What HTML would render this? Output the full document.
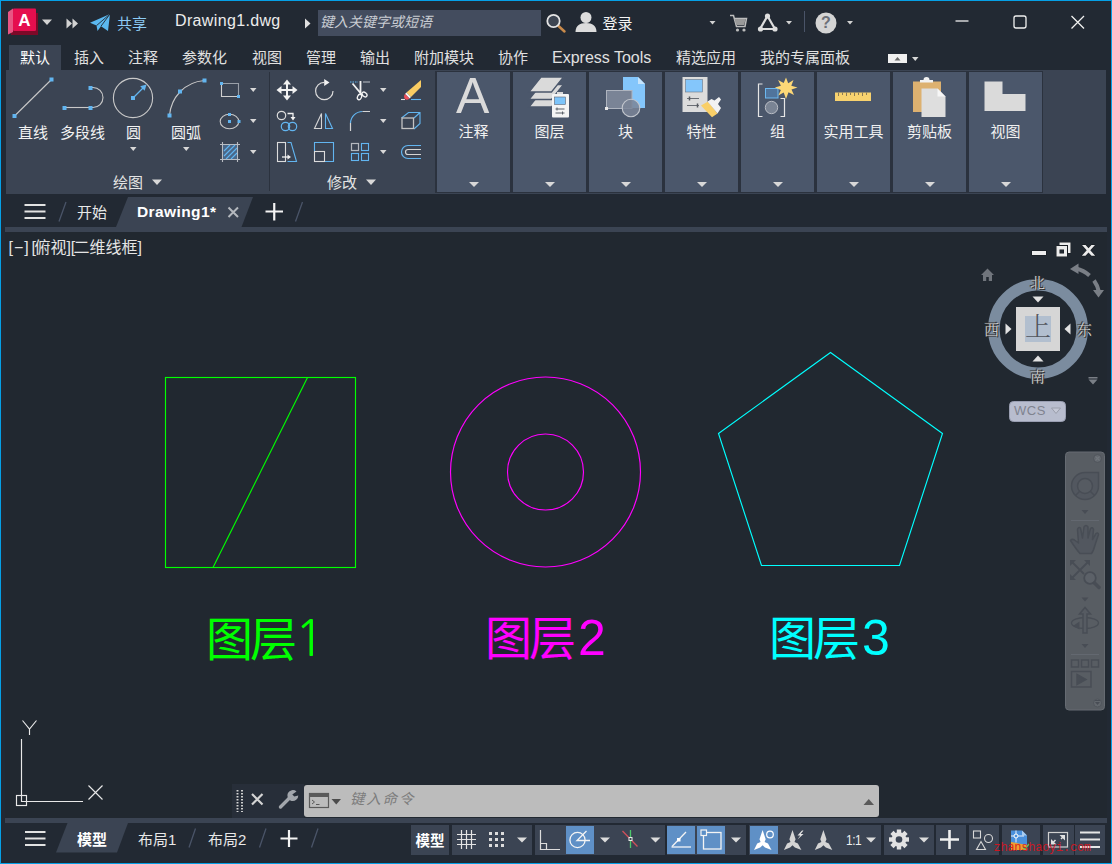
<!DOCTYPE html>
<html lang="zh-CN">
<head>
<meta charset="utf-8">
<title>Drawing1.dwg</title>
<style>
*{box-sizing:border-box;margin:0;padding:0}
html,body{width:1112px;height:864px;overflow:hidden;background:#222933}
body{font-family:"Liberation Sans","Noto Sans CJK SC",sans-serif;color:#e6e6e6;font-size:15px;position:relative}
#win{position:absolute;left:0;top:0;width:1112px;height:864px;border:1px solid #05a0e6;background:#222933;overflow:hidden}
.abs{position:absolute}
.t{position:absolute;white-space:nowrap;line-height:1}
svg{position:absolute;overflow:visible}
/* title bar */
#search{position:absolute;left:317px;top:9px;width:223px;height:26px;background:#434c5e}
#search span{position:absolute;left:2px;top:5px;font-style:italic;font-size:14px;color:#c9cdd3;line-height:1}
/* ribbon */
#tabs .t{top:49px;font-size:15px;color:#e0e0e0}
#tab-active{position:absolute;left:8px;top:44px;width:52px;height:26px;background:#3b4453}
#ribbon{position:absolute;left:5px;top:69px;width:1100px;height:124px;background:#3b4453}
.panel{position:absolute;top:71px;width:73px;height:120px;background:#4b576b}
.panel .lbl{position:absolute;left:0;width:73px;top:52px;text-align:center;font-size:15px;line-height:1;color:#f0f0f0}
.dd{position:absolute;width:0;height:0;border-left:5px solid transparent;border-right:5px solid transparent;border-top:5px solid #d8d8d8}
.dds{position:absolute;width:0;height:0;border-left:4px solid transparent;border-right:4px solid transparent;border-top:4px solid #d8d8d8}
.dg{font-size:50px;margin-left:5px}
.vcl{font-size:15px;color:#cfcfcf;text-shadow:0 0 1px #333,1px 1px 0 #333,-1px -1px 0 #333;font-family:"Liberation Serif","Noto Serif CJK SC",serif}
.rl{font-size:15px;color:#f2f2f2}
.bk{letter-spacing:-1.500px}
/* file tabs */
#ftbar{position:absolute;left:4px;top:226px;width:1102px;height:5px;background:#3b4453}
/* drawing */
#cmd-left{position:absolute;left:231px;top:783px;width:72px;height:34px;background:#272e39}
#cmd{position:absolute;left:303px;top:784px;width:575px;height:32px;background:#bcbcbc;border-radius:3px}
#sbbar{position:absolute;left:4px;top:817px;width:1102px;height:5px;background:#3b4453}
.sb{position:absolute;top:824px;height:30px;background:#3b4453}
.sbon{position:absolute;top:825px;height:28px;background:#5f90c6}
</style>
</head>
<body>
<div id="win">

<!-- TITLE BAR -->
<div id="titlebar">
  <div id="search"><span>键入关键字或短语</span></div>
  <svg width="1110" height="44" style="left:0;top:0">
    <!-- logo -->
    <path d="M10 31l2-1h23v-18h2v22h-27z" fill="#7d0928"/>
    <path d="M7 11l5-3.500v23.500l-5 2.500z" fill="#e85583"/>
    <rect x="12" y="7.500" width="23" height="22.500" rx="1" fill="#e50e4e"/>
    <!-- qat arrows -->
    <path d="M41 18.500h10l-5 5.500z" fill="#d2d2d2"/>
    <path d="M65.500 17.500v10l5.500-5z M71.500 17.500v10l5.500-5z" fill="#d2d2d2"/>
    <!-- share plane -->
    <path d="M89 21.800L109 13L107 30L100 25.200L96.500 30L95.500 24.600Z" fill="#5bb8f0"/>
    <path d="M109 13L95.500 24.600M109 13L100 25.200" stroke="#222933" stroke-width=".9" fill="none"/>
    <path d="M304 17.500v10l5.500-5z" fill="#e0e0e0"/>
    <!-- magnifier -->
    <path d="M557.500 25l6 5.500" stroke="#c98a4a" stroke-width="2.500" stroke-linecap="round"/>
    <circle cx="552.500" cy="20" r="6.200" fill="#3d4552" stroke="#e4e4e4" stroke-width="1.800"/>
    <!-- user -->
    <circle cx="585" cy="16.500" r="5.500" fill="#dcdcdc"/>
    <path d="M574.500 31c0-6 4-9 10.500-9s10.500 3 10.500 9z" fill="#dcdcdc"/>
    <path d="M708.500 20h6l-3 3.500z" fill="#d2d2d2"/>
    <!-- cart -->
    <g fill="none" stroke="#bdbdbd" stroke-width="1.500">
      <path d="M729 14.500h3.500l3 11h8.500l1.500-8h-12"/>
    </g>
    <path d="M733.500 18h11l-1.200 6h-8z" fill="#9a9a9a"/>
    <circle cx="736.500" cy="29" r="1.600" fill="#bdbdbd"/><circle cx="743" cy="29" r="1.600" fill="#bdbdbd"/>
    <!-- autodesk app -->
    <path d="M766.500 15l-7.500 13h15z" fill="none" stroke="#dedede" stroke-width="2.200" stroke-linejoin="round"/>
    <circle cx="766.500" cy="15" r="2.600" fill="#dedede"/><circle cx="759.500" cy="28" r="2.600" fill="#dedede"/><circle cx="774" cy="28" r="2.600" fill="#dedede"/>
    <path d="M785 20h6l-3 3.500z" fill="#d2d2d2"/>
    <path d="M803.500 10v21" stroke="#4a5468" stroke-width="1"/>
    <!-- help -->
    <circle cx="825" cy="22" r="10.500" fill="#d4d4d4"/>
    <path d="M846 20h6l-3 3.500z" fill="#d2d2d2"/>
    <!-- window controls -->
    <g fill="none" stroke="#f0f0f0" stroke-width="1.300">
      <path d="M954.500 20h13"/>
      <rect x="1013" y="15" width="12" height="12" rx="2"/>
      <path d="M1070.500 15l12.500 12.500M1083 15l-12.500 12.500"/>
    </g>
  </svg>
  <div class="t" style="left:17.300px;top:11px;font-size:17px;font-weight:bold;color:#fff">A</div>
  <div class="t" style="left:820px;top:14px;font-size:16px;font-weight:bold;color:#6c7078">?</div>
  <div class="t" style="left:174px;top:12px;font-size:16px;color:#ececec;letter-spacing:.35px">Drawing1.dwg</div>
  <div class="t" style="left:116px;top:15px;font-size:15px;color:#8ccbf5">共享</div>
  <div class="t" style="left:601.500px;top:15px;font-size:15px;color:#f4f4f4">登录</div>
</div>

<!-- RIBBON TABS -->
<div id="tabs">
  <div id="tab-active"></div>
  <div class="t" style="left:19px;color:#fff">默认</div>
  <div class="t" style="left:73px">插入</div>
  <div class="t" style="left:127px">注释</div>
  <div class="t" style="left:181px">参数化</div>
  <div class="t" style="left:251px">视图</div>
  <div class="t" style="left:305px">管理</div>
  <div class="t" style="left:359px">输出</div>
  <div class="t" style="left:413px">附加模块</div>
  <div class="t" style="left:497px">协作</div>
  <div class="t" style="left:551px;top:49px;font-size:16px">Express Tools</div>
  <div class="t" style="left:675px">精选应用</div>
  <div class="t" style="left:759px">我的专属面板</div>
</div>

<!-- RIBBON -->
<div id="ribbon"></div>
<div class="abs" style="left:434px;top:70px;width:608px;height:122px;background:#2b323e"></div>
<div id="panels">
  <div class="panel" style="left:436px"><div class="lbl">注释</div><div class="dd" style="left:32px;top:110px"></div></div>
  <div class="panel" style="left:512px"><div class="lbl">图层</div><div class="dd" style="left:32px;top:110px"></div></div>
  <div class="panel" style="left:588px"><div class="lbl">块</div><div class="dd" style="left:32px;top:110px"></div></div>
  <div class="panel" style="left:664px"><div class="lbl">特性</div><div class="dd" style="left:32px;top:110px"></div></div>
  <div class="panel" style="left:740px"><div class="lbl">组</div><div class="dd" style="left:32px;top:110px"></div></div>
  <div class="panel" style="left:816px"><div class="lbl">实用工具</div><div class="dd" style="left:32px;top:110px"></div></div>
  <div class="panel" style="left:892px"><div class="lbl">剪贴板</div><div class="dd" style="left:32px;top:110px"></div></div>
  <div class="panel" style="left:968px"><div class="lbl">视图</div><div class="dd" style="left:32px;top:110px"></div></div>
</div>


<!-- RIBBON ICONS (page coords) -->
<svg width="1112" height="200" style="left:-1px;top:-1px" fill="none">
  <!-- collapse button in tab row -->
  <rect x="888" y="54" width="19" height="9" fill="#f0f0f0"/>
  <path d="M894.500 60.500h6l-3-3.500z" fill="#6a6a6a"/>
  <path d="M912 57h6.500l-3.250 4z" fill="#d8d8d8"/>
  <!-- separators -->
  <path d="M269.500 72v119" stroke="#2b323e" stroke-width="1"/>
  <!-- DRAW: line -->
  <g stroke="#c9c9c9" stroke-width="1.100">
    <path d="M14.500 116l37-36.500"/>
    <path d="M65 107.500h25.500"/>
    <path d="M90.500 87.500h2.500a10 10 0 0 1 0 20h-2.500"/>
    <circle cx="133" cy="98" r="19.600"/>
    <path d="M169.500 115.500C171 98 184 82 204.500 80.500"/>
  </g>
  <path d="M133 98l11-11" stroke="#62b5f0" stroke-width="1.200"/>
  <path d="M146.500 84.500l-1.800 6.300-4.500-4.500z" fill="#62b5f0"/>
  <g fill="#62b5f0">
    <rect x="12.500" y="114" width="4" height="4"/><rect x="49.500" y="77.500" width="4" height="4"/>
    <rect x="62.500" y="106" width="4" height="4"/><rect x="88.500" y="106" width="4" height="4"/><rect x="88.500" y="86" width="4" height="4"/>
    <rect x="131" y="96" width="4" height="4"/>
    <rect x="167.500" y="113.500" width="4" height="4"/><rect x="178" y="89.500" width="4" height="4"/><rect x="202.500" y="78.500" width="4" height="4"/>
  </g>
  <!-- rectangle -->
  <path d="M221.500 83.500h17v13" stroke="#9aa0a8" stroke-width="1.100"/>
  <path d="M221.500 83.500v13h17" stroke="#d0d0d0" stroke-width="1.100"/>
  <rect x="220" y="82" width="3" height="3" fill="#62b5f0"/><rect x="237" y="95" width="3" height="3" fill="#62b5f0"/>
  <!-- ellipse -->
  <ellipse cx="229.500" cy="121.500" rx="9.300" ry="7.300" stroke="#c9c9c9" stroke-width="1.100"/>
  <rect x="228" y="113" width="3" height="3" fill="#62b5f0"/><rect x="228" y="120" width="3" height="3" fill="#62b5f0"/><rect x="237.500" y="120" width="3" height="3" fill="#62b5f0"/>
  <!-- hatch -->
  <path d="M220 144.500h20M220 159.500h20M222.500 142v20M237.500 142v20" stroke="#b8bcc2" stroke-width="1.100"/>
  <rect x="223" y="145" width="14" height="14" fill="#4a6788"/>
  <path d="M224 151l6-6M224 156l11-11M226 159l11-11M231 159l6-6" stroke="#62b5f0" stroke-width="1.100"/>
  <!-- small dropdown arrows -->
  <g fill="#d8d8d8">
    <path d="M130 147h6.500l-3.250 4z"/><path d="M183 147h6.500l-3.250 4z"/>
    <path d="M250 88h6.500l-3.250 4z"/><path d="M250 119h6.500l-3.250 4z"/><path d="M250 150h6.500l-3.250 4z"/>
    <path d="M380 88h6.500l-3.250 4z"/><path d="M380 119h6.500l-3.250 4z"/><path d="M380 150h6.500l-3.250 4z"/>
    <path d="M152 179.500h10l-5 5.500z"/><path d="M366 179.500h10l-5 5.500z"/>
  </g>
  <!-- MODIFY: move -->
  <g fill="#f2f2f2">
    <path d="M286 84h2v12h-2z M281 89h12v2h-12z"/>
    <path d="M287 79.500l4 5h-8z M287 100.500l4-5h-8z M276.500 90l5-4v8z M297.500 90l-5-4v8z"/>
  </g>
  <!-- rotate -->
  <path d="M333 91A8.700 8.700 0 1 1 324.300 82.300" stroke="#dcdcdc" stroke-width="1.200"/>
  <path d="M324.200 79l5.300 3.500-5.300 3.500z" fill="#f2f2f2"/>
  <!-- trim -->
  <path d="M350 82h8" stroke="#62b5f0" stroke-width="1.200" stroke-dasharray="1.500 1"/>
  <path d="M363 82h7" stroke="#a8adb5" stroke-width="1.200"/>
  <path d="M352.500 83.500l10 12M360.500 81v14" stroke="#f2f2f2" stroke-width="1.800"/>
  <ellipse cx="359.500" cy="97" rx="2" ry="2.800" stroke="#f2f2f2" stroke-width="1.300" transform="rotate(25 359.500 97)"/>
  <ellipse cx="364.500" cy="94.500" rx="2" ry="2.800" stroke="#f2f2f2" stroke-width="1.300" transform="rotate(-50 364.500 94.500)"/>
  <!-- erase -->
  <path d="M421 80v7l-10 10-4.500-4.500z" fill="#f9cc62"/>
  <path d="M406.500 92.500l4.500 4.500-1.500 1.500-4.500-4.500z" fill="#f4f4f4"/>
  <path d="M405 94l4.500 4.500c-1.500 1.500-3.500 1.500-4.500.5s-1.500-3.500 0-5z" fill="#f0505a"/>
  <path d="M401 99.500h4" stroke="#e0e0e0" stroke-width="1.100"/><path d="M411 99.500h10" stroke="#62b5f0" stroke-width="1.100"/>
  <!-- copy -->
  <circle cx="281.500" cy="115.500" r="4.200" stroke="#dcdcdc" stroke-width="1.200"/>
  <path d="M287.500 113.500h5.500v4" stroke="#f2f2f2" stroke-width="1.300"/><path d="M290.500 117h5l-2.500 3.500z" fill="#f2f2f2"/>
  <circle cx="285.500" cy="126.500" r="4.200" stroke="#62b5f0" stroke-width="1.200"/><circle cx="292.500" cy="126.500" r="4.200" stroke="#62b5f0" stroke-width="1.200"/>
  <!-- mirror -->
  <path d="M321.500 113.500v15h-7z" stroke="#d4d4d4" stroke-width="1.100"/>
  <path d="M325.500 113.500v15h7z" stroke="#62b5f0" stroke-width="1.100"/>
  <!-- fillet -->
  <path d="M350.500 123a12 12 0 0 1 12-11.500" stroke="#62b5f0" stroke-width="1.200"/>
  <path d="M362.500 111.500h7.500M350.500 123v8" stroke="#d4d4d4" stroke-width="1.200"/>
  <!-- box/explode -->
  <path d="M401.500 118l7-5.500h11.500v11l-6 5.500M420 112.500l-6 5.500" stroke="#62b5f0" stroke-width="1.100"/>
  <rect x="402" y="118" width="11.500" height="10.500" stroke="#c4c4c4" stroke-width="1.300"/>
  <!-- stretch -->
  <rect x="277.500" y="142.500" width="8" height="19" stroke="#dcdcdc" stroke-width="1.100"/>
  <path d="M287.500 142.500h3.500l5.500 19h-9" stroke="#62b5f0" stroke-width="1.100"/>
  <path d="M282 157h6" stroke="#f2f2f2" stroke-width="1.300"/><path d="M287.500 154.500l3.500 2.500-3.500 2.500z" fill="#f2f2f2"/>
  <!-- scale -->
  <path d="M314.500 151v-8.500h19v19h-8.500" stroke="#62b5f0" stroke-width="1.100"/>
  <rect x="314.500" y="151.500" width="10" height="10" stroke="#dcdcdc" stroke-width="1.100"/>
  <!-- array -->
  <rect x="351.500" y="143.500" width="7" height="7" stroke="#b4b8be" stroke-width="1.200"/>
  <g stroke="#62b5f0" stroke-width="1.100"><rect x="361.500" y="143.500" width="7" height="7"/><rect x="351.500" y="153.500" width="7" height="7"/><rect x="361.500" y="153.500" width="7" height="7"/></g>
  <!-- offset -->
  <path d="M421 145.500h-13a6.500 6.500 0 0 0 0 13h13" stroke="#62b5f0" stroke-width="1.200"/>
  <path d="M421 149.500h-13a2.500 2.500 0 0 0 0 5h13" stroke="#d4d4d4" stroke-width="1.200"/>

  <!-- PANEL: layers -->
  <g fill="#dadada" stroke="#4b576b" stroke-width="1.300">
    <path d="M541 92h22.500l-12 15h-22.500z"/>
    <path d="M541 84.500h22.500l-12 15h-22.500z"/>
    <path d="M541 77h22.500l-12 15h-22.500z"/>
  </g>
  <rect x="557" y="92" width="6" height="3" fill="#dadada"/>
  <rect x="552" y="94" width="17" height="23.500" rx="1" fill="#f4f4f4"/>
  <rect x="554.500" y="97" width="11" height="7.500" fill="#7cc4fa" stroke="#5a6575" stroke-width=".6"/>
  <path d="M555.500 109h9M555.500 113h9" stroke="#5a6068" stroke-width="1"/><path d="M557 107.500v3M562.500 111.500v3" stroke="#5a6068" stroke-width="1"/>
  <!-- PANEL: block -->
  <path d="M623 77h15l7 7v24h-22z" fill="#84c6fb"/><path d="M638 77v7h7z" fill="#c6e4fb"/>
  <rect x="606.500" y="90.500" width="25.500" height="18" fill="#7a8496" stroke="#aeb4bf" stroke-width="1"/>
  <circle cx="631" cy="108" r="8.800" fill="#7a8496" fill-opacity=".85" stroke="#c2c6cd" stroke-width="1.100"/>
  <rect x="605" y="107" width="3" height="3" fill="#e8e8e8"/>
  <!-- PANEL: properties -->
  <rect x="682.500" y="77" width="25" height="35" fill="#dcdcdc"/>
  <rect x="685.500" y="79.500" width="17" height="12.500" fill="#84c6fb" stroke="#6a7585" stroke-width=".6"/>
  <path d="M687 98.500h12M687 105.500h12" stroke="#6a6e75" stroke-width="1"/><path d="M689.500 96.500v4M697.500 103.500v4" stroke="#55595f" stroke-width="1.500"/>
  <path d="M701 105.500l7-4 9.500 12-5.500 3.700z" fill="#f9cf68"/>
  <path d="M707.500 101.500l4-2.500 3 1.500 4.500-3.500 2 2.500-3 4.500 3 4-3.500 5.500z" fill="#f2f2f2"/>
  <!-- PANEL: group -->
  <path d="M762.500 84h-4v32.500h4M780.500 98.500h4v18h-4" stroke="#e6e6e6" stroke-width="1.200"/>
  <rect x="765.500" y="88.500" width="12.500" height="9.500" fill="#50749c" stroke="#6cb8f0" stroke-width="1"/>
  <circle cx="771.500" cy="107.500" r="6.200" fill="#7a8494" stroke="#b8bcc4" stroke-width="1"/>
  <path d="M786 77.500l2.200 5.800 5.300-3.200-2.200 5.600 6.200 1.800-6 2 2.500 5.500-5.500-2.700-2.500 6.700-2.300-6.500-5.400 3 2.600-5.600-6-2.400 6-1.800-2.800-5.600 5.600 2.900z" fill="#fdd877"/>
  <!-- PANEL: utilities -->
  <rect x="835" y="92.500" width="36" height="8.500" fill="#f8d26e"/>
  <path d="M838.500 92.500v3.500M842.500 92.500v2.500M846.500 92.500v3.500M850.500 92.500v2.500M854.500 92.500v3.500M858.500 92.500v2.500M862.500 92.500v3.500M866.500 92.500v2.500" stroke="#8a7a55" stroke-width="1"/>
  <!-- PANEL: clipboard -->
  <rect x="913" y="81.500" width="28" height="30.500" fill="#ddb170"/>
  <path d="M920 82.500v-2.500h3.500a3 3 0 0 1 6 0h3.500v2.500z" fill="#f2f2f2"/>
  <path d="M921.500 88.500h16l8 8v20.500h-24z" fill="#dedede"/><path d="M937.500 88.500v8h8z" fill="#f6f6f6"/>
  <!-- PANEL: view -->
  <path d="M984.500 81.500h18v12.500h23v17h-41z" fill="#dadada"/>
</svg>
<div id="ribtext">
  <div class="t rl" style="left:17px;top:124px">直线</div>
  <div class="t rl" style="left:59px;top:124px">多段线</div>
  <div class="t rl" style="left:125px;top:124px">圆</div>
  <div class="t rl" style="left:170px;top:124px">圆弧</div>
  <div class="t rl" style="left:112px;top:174px;color:#e4e4e4">绘图</div>
  <div class="t rl" style="left:326px;top:174px;color:#e4e4e4">修改</div>
  <div class="t" style="left:455px;top:70px;font-size:50px;color:#dadada">A</div>
</div>

<!-- FILE TABS -->
<div id="ftbar"></div>
<svg width="1112" height="40" style="left:-1px;top:192px" fill="none">
  <path d="M128 4h125l-11.500 30h-125.500z" fill="#3b4453"/>
  <path d="M24.500 12h21M24.500 18.500h21M24.500 25h21" stroke="#e2e2e2" stroke-width="2"/>
  <path d="M66 9l-7 19.500M302.500 9l-7 19.500" stroke="#4a5468" stroke-width="1.300"/>
  <path d="M228.500 14.500l9.500 9.500M238 14.500l-9.500 9.500" stroke="#b4b8be" stroke-width="2"/>
  <path d="M265.500 18.500h17.500M274.250 10v17.500" stroke="#f4f4f4" stroke-width="2.200"/>
</svg>
<div class="t" style="left:76px;top:204px;font-size:15px;color:#e8e8e8">开始</div>
<div class="t" style="left:136px;top:203px;font-size:15.500px;font-weight:bold;color:#fff;letter-spacing:.4px">Drawing1*</div>

<!-- DRAWING AREA -->
<div id="drawing">
  <div class="abs" style="left:4px;top:231px;width:1102px;height:586px;background:#212830"></div>
  <div class="t" style="left:7.500px;top:239px;font-size:16px;color:#e4e4e4"><span style="letter-spacing:1px">[−]</span><span class="bk" style="margin-left:1.800px">[</span>俯视<span class="bk">]</span><span class="bk" style="margin-left:1.300px;letter-spacing:-1.800px">[</span>二维线框<span class="bk">]</span></div>
  <svg width="1110" height="862" style="left:0;top:0" fill="none" stroke-width="1.150">
    <g stroke="#00ff00"><rect x="164.5" y="376.5" width="190" height="190"/><line x1="306.5" y1="376.5" x2="212" y2="566.5"/></g>
    <g stroke="#ff00ff"><circle cx="544.5" cy="471" r="95"/><circle cx="544.5" cy="471" r="38"/></g>
    <polygon stroke="#00ffff" points="829.5,351.5 941.5,432.5 898.5,564.5 760.5,564.5 717.5,432.5"/>
    <!-- UCS icon -->
    <g stroke="#e8e8e8">
      <path d="M20.5 738V800.5H82"/><rect x="15.5" y="794.5" width="10" height="10"/>
      <path d="M21.5 719.5L28.5 728L35.5 719.5M28.5 728V734"/>
      <path d="M87.5 784.5L101.5 798.5M101.5 784.5L87.5 798.5"/>
    </g>
  </svg>
  <div class="t" style="left:205px;top:612px;font-size:47px;color:#00ff00;letter-spacing:-3px">图层<span class="dg" style="margin-left:.5px;font-family:NanumGothic,'Liberation Sans',sans-serif">1</span></div>
  <div class="t" style="left:484px;top:612px;font-size:47px;color:#ff00ff;letter-spacing:-3px">图层<span class="dg">2</span></div>
  <div class="t" style="left:768px;top:612px;font-size:47px;color:#00ffff;letter-spacing:-3px">图层<span class="dg">3</span></div>
</div>


<!-- VIEWPORT CONTROLS + VIEWCUBE -->
<div id="viewcube">
  <svg width="1110" height="862" style="left:0;top:0">
    <!-- min / restore / close -->
    <g fill="#ececec" stroke="#15181d" stroke-width="1" paint-order="stroke">
      <rect x="1031" y="250" width="14" height="4"/>
      <path d="M1058.500 241.500h11v10.500h-2.500v-8h-8.500z"/><path d="M1055.500 245h10.500v10.500h-10.500z M1058.500 248.500v4h4.500v-4z" fill-rule="evenodd"/>
      <path d="M1081 244h3.6l2.9 3.2 2.9-3.2h3.6l-4.7 5.3 4.9 5.5h-3.7l-3-3.4-3 3.4h-3.7l4.9-5.5z"/>
    </g>
    <!-- home -->
    <path d="M986.5 267.5l6.5 6.5h-2v6h-3.2v-4h-2.6v4h-3.2v-6h-2z" fill="#70757c"/>
    <!-- rotate arrows -->
    <g fill="none" stroke="#7a7f86" stroke-width="4">
      <path d="M1075 267.500A30 30 0 0 1 1088.500 274.500"/>
      <path d="M1093 279.500A30 30 0 0 1 1098 291"/>
    </g>
    <path d="M1069 268l8.500-5.500v10.500z" fill="#7a7f86"/>
    <path d="M1097.500 296.500l-5.500-7.500h11z" fill="#7a7f86"/>
    <!-- ring -->
    <circle cx="1037" cy="328" r="44.200" fill="none" stroke="#7b8c9f" stroke-width="11.600"/>
    <!-- cube face -->
    <rect x="1015" y="306" width="44" height="44" fill="#d6d6d6"/>
    <rect x="1024" y="315" width="26" height="26" fill="#b2bfcf"/>
    <!-- small triangles -->
    <g fill="#e2e2e2">
      <path d="M1031.500 295.500h11l-5.500 6z"/>
      <path d="M1031.500 360.500h11l-5.500-6z"/>
      <path d="M1004.500 322.500v11l6-5.500z"/>
      <path d="M1069.500 322.500v11l-6-5.500z"/>
    </g>
    <!-- lower-right dropdown -->
    <path d="M1087.500 376h9v1.500h-9z M1087.500 378.500h9l-4.500 5z" fill="#7a7f86"/>
    <!-- WCS -->
    <rect x="1008.500" y="400.500" width="56" height="20" rx="4" fill="#b8bdce" stroke="#9a9fb2"/>
    <path d="M1050.500 407h9l-4.500 5.500z" fill="#c4c8d6" stroke="#9a9eab" stroke-width="1"/>
  </svg>
  <div class="t vcl" style="left:1029px;top:275px">北</div>
  <div class="t vcl" style="left:1029px;top:369px">南</div>
  <div class="t vcl" style="left:983px;top:322px">西</div>
  <div class="t vcl" style="left:1076px;top:322px">东</div>
  <div class="t" style="left:1024px;top:314px;width:26px;text-align:center;font-family:'Liberation Serif','Noto Serif CJK SC',serif;font-weight:300;font-size:26px;color:#50545c">上</div>
  <div class="t" style="left:1013px;top:403px;font-size:13px;color:#7f838f;letter-spacing:.5px">WCS</div>
</div>

<!-- NAV BAR -->
<div id="navbar">
  <svg width="1112" height="864" style="left:-1px;top:-1px">
    <rect x="1065.500" y="452" width="39" height="258" rx="3.500" fill="#585d63" stroke="#666b72" stroke-width="1"/>
    <g fill="none" stroke="#484d55" stroke-width="1.500">
      <circle cx="1097.500" cy="458.500" r="4" fill="#62676d" stroke="#50555c" stroke-width="1"/>
      <path d="M1095.500 456.500l4 4m0-4l-4 4" stroke="#70757b" stroke-width="1.200"/>
      <!-- steering wheel -->
      <path d="M1085 472.500h13.500v13.500a13.500 13.500 0 1 1-13.500-13.500z" fill="#52575f"/>
      <circle cx="1085" cy="486" r="7.500" fill="#565b62"/>
      <path d="M1079.500 491.500l-4 4M1090.500 491.500l4 4"/>
      <path d="M1071 520.500h28M1071 654.500h28" stroke-width="1" stroke="#636870"/>
      <!-- hand -->
      <path d="M1070.500 540.500Q1072 538.500 1074.500 540L1078.500 543L1077.500 529.500Q1078.500 526.500 1080.500 528L1082.500 538L1084 527Q1086 524 1088 527L1088 538L1090.500 528.500Q1092.500 526.500 1093.500 529.500L1092.500 539.500L1096 533.500Q1098 532 1098.500 534.500L1095 545Q1093.500 551 1091.500 553.500L1080 553.500Q1076 549 1070.500 540.500Z" fill="#52575f" stroke-linejoin="round"/>
      <!-- zoom extents -->
      <path d="M1071 561l13 13M1089 561l-18 18" stroke-width="1.800"/>
      <path d="M1070 560v6l6-6zM1090 560v6l-6-6zM1070 580v-6l6 6z" fill="#484d55" stroke="none"/>
      <circle cx="1090" cy="578" r="5.800" fill="#5c6168" stroke-width="1.800"/>
      <path d="M1094.500 583l4.500 4.500" stroke-width="3.500" stroke-linecap="round"/>
      <!-- orbit -->
      <ellipse cx="1085" cy="623" rx="13.500" ry="5.500" stroke-width="1.300"/>
      <path d="M1083 633v-19h-3.500l5.500-6.500 5.500 6.500h-3.500v19z" fill="#565b62"/>
      <path d="M1079.500 629.500l-6.500-3.500 6.500-4.500z" fill="#484d55" stroke="none"/>
      <!-- showmotion -->
      <rect x="1071.500" y="660" width="7" height="7"/><rect x="1081.500" y="660" width="7" height="7"/><rect x="1091.500" y="660" width="7" height="7"/>
      <rect x="1071.500" y="671.500" width="19.500" height="15.500"/>
      <path d="M1077 674.500l9 5-9 5z" fill="#484d55"/>
      <circle cx="1097.500" cy="703" r="4" fill="#62676d" stroke="#50555c" stroke-width="1"/>
    </g>
    <g fill="#484d55">
      <path d="M1081.500 510h7l-3.500 4z"/><path d="M1081.500 597.500h7l-3.500 4z"/><path d="M1081.500 644h7l-3.500 4z"/>
      <path d="M1095 702h5l-2.500 3z"/><path d="M1095 700.500h5" stroke="#484d55" stroke-width="1"/>
    </g>
  </svg>
</div>

<!-- COMMAND LINE -->
<div id="cmd-left"></div>
<div id="cmd"><span class="t" style="left:46px;top:7px;font-size:14.500px;font-style:italic;color:#7c7c7c;letter-spacing:1.800px">键入命令</span></div>
<svg width="1112" height="40" style="left:-1px;top:783px" fill="none">
  <path d="M237.500 6v22M242 6v22" stroke="#d4d4d4" stroke-width="1.900" stroke-dasharray="1.500 1.500"/>
  <path d="M252 10l10.500 10.500M262.500 10l-10.500 10.500" stroke="#d4d4d4" stroke-width="2.200"/>
  <path d="M280.500 23l9.500-9.500" stroke="#a2a6ac" stroke-width="3.400" stroke-linecap="round"/>
  <path d="M296.500 7.500a5.500 5.500 0 1 0 1.800 4l-4 1-2-2z" fill="#a2a6ac"/>
  <rect x="309.500" y="9.500" width="19" height="14" stroke="#5a5a5a" stroke-width="1.200"/>
  <rect x="309.500" y="9.500" width="19" height="3.500" fill="#5a5a5a"/>
  <path d="M312 16l2.500 2-2.500 2M316 20.500h3.500" stroke="#5a5a5a" stroke-width="1"/>
  <path d="M331.500 15h9.500l-4.750 5.500z" fill="#4c4c4c"/>
  <path d="M863.500 21h10.500l-5.250-6z" fill="#5a5a5a"/>
</svg>

<!-- STATUS BAR -->
<div id="sbbar"></div>
<div class="sb" style="left:410px;width:38px"></div>
<div class="sb" style="left:451px;width:80px"></div>
<div class="sb" style="left:534px;width:130px"></div>
<div class="sb" style="left:666px;width:79px"></div>
<div class="sb" style="left:748px;width:132px"></div>
<div class="sb" style="left:883px;width:50px"></div>
<div class="sb" style="left:934.500px;width:30px"></div>
<div class="sb" style="left:967.500px;width:30.500px"></div>
<div class="sb" style="left:1001px;width:38px"></div>
<div class="sb" style="left:1042px;width:30.500px"></div>
<div class="sb" style="left:1074px;width:30px"></div>
<div class="sbon" style="left:565px;width:28px"></div>
<div class="sbon" style="left:666px;width:28px"></div>
<div class="sbon" style="left:696px;width:28px"></div>
<div class="sbon" style="left:749px;width:28px"></div>
<svg width="1112" height="48" style="left:-1px;top:814px" fill="none">
  <!-- layout tabs -->
  <path d="M67.500 8h60.500l-11 29.500h-61z" fill="#3b4453"/>
  <path d="M25 17h20.500M25 23.500h20.500M25 30h20.500" stroke="#e2e2e2" stroke-width="2"/>
  <path d="M195.500 13.500l-6.500 19M266 13.500l-6.500 19M318 13.500l-6.500 19" stroke="#4a5468" stroke-width="1.300"/>
  <path d="M280.500 23.500h17M289 15v17" stroke="#f4f4f4" stroke-width="2.200"/>
  <!-- grid -->
  <path d="M461.500 15v19M466.500 15v19M471.500 15v19M457 19.500h19M457 24.500h19M457 29.500h19" stroke="#e4e4e4" stroke-width="1.200"/>
  <g fill="#dcdcdc">
    <rect x="489" y="17" width="3" height="3"/><rect x="495" y="17" width="3" height="3"/><rect x="501" y="17" width="3" height="3"/>
    <rect x="489" y="23" width="3" height="3"/><rect x="495" y="23" width="3" height="3"/><rect x="501" y="23" width="3" height="3"/>
    <rect x="489" y="29" width="3" height="3"/><rect x="495" y="29" width="3" height="3"/><rect x="501" y="29" width="3" height="3"/>
  </g>
  <g fill="#dcdcdc">
    <path d="M517 22.500h10l-5 5z"/><path d="M600 22.500h10l-5 5z"/><path d="M650.500 22.500h10l-5 5z"/><path d="M731 22.500h10l-5 5z"/>
    <path d="M866 22.500h10l-5 5z"/><path d="M919 22.500h10l-5 5z"/>
  </g>
  <!-- ortho -->
  <path d="M540.500 15v19.500h19.500M540.500 28.500h6v6" stroke="#dcdcdc" stroke-width="1.200"/>
  <!-- polar -->
  <circle cx="577.500" cy="25" r="7.600" stroke="#f4f4f4" stroke-width="1.300"/>
  <path d="M590 25.500h-13l9.500-9.500" stroke="#f4f4f4" stroke-width="1.300"/>
  <!-- isodraft -->
  <path d="M622.500 16l15 15.500" stroke="#d0505a" stroke-width="1.300"/>
  <path d="M630.500 15v18" stroke="#4cc86a" stroke-width="1.300"/>
  <rect x="629" y="22.500" width="3" height="3" fill="#3b4453" stroke="#e8e8e8" stroke-width="1"/>
  <!-- otrack -->
  <path d="M671.500 32h19.500" stroke="#d8e2ee" stroke-width="1.600"/><path d="M672 31.500l14-14.500" stroke="#f4f4f4" stroke-width="1.300"/>
  <rect x="677" y="23" width="3.500" height="3.500" fill="#fff"/>
  <!-- osnap -->
  <rect x="703.500" y="17.500" width="17.500" height="16.500" stroke="#f4f4f4" stroke-width="1.300"/>
  <rect x="701" y="15" width="5.500" height="5.500" fill="#5b8fc7" stroke="#f4f4f4" stroke-width="1.200"/>
  <!-- annotation icons -->
  <path d="M762.600 15L765.700 24.300L764.600 27L768 28.600L771.500 35L765 32.600L762.600 30.300L760.200 32.600L754 35L757.200 28.600L760.600 27L759.500 24.300Z" fill="#fff"/>
  <circle cx="770" cy="19.500" r="3.300" stroke="#fff" stroke-width="1.200"/>
  <path d="M762.600 15L765.700 24.300L764.600 27L768 28.600L771.500 35L765 32.600L762.600 30.300L760.200 32.600L754 35L757.200 28.600L760.600 27L759.500 24.300Z" fill="#d4d4d4" transform="translate(29.900 0)"/>
  <path d="M802 15.500l-4.500 5h2.800l-2.800 4 6-5.500h-2.800l2.800-3.500z" fill="#e4e4e4"/>
  <path d="M762.600 15L765.700 24.300L764.600 27L768 28.600L771.500 35L765 32.600L762.600 30.300L760.200 32.600L754 35L757.200 28.600L760.600 27L759.500 24.300Z" fill="#d4d4d4" transform="translate(60.800 0)"/>
  <!-- gear -->
  <g transform="translate(899 24.500)">
    <g fill="#e2e2e2">
      <rect x="-2.200" y="-10" width="4.400" height="20"/>
      <rect x="-2.200" y="-10" width="4.400" height="20" transform="rotate(45)"/>
      <rect x="-2.200" y="-10" width="4.400" height="20" transform="rotate(90)"/>
      <rect x="-2.200" y="-10" width="4.400" height="20" transform="rotate(135)"/>
      <circle r="7.300"/>
    </g>
    <circle r="3.300" fill="#3b4453"/>
  </g>
  <!-- plus -->
  <path d="M940 24.500h19M949.500 15v19" stroke="#f0f0f0" stroke-width="2.600"/>
  <!-- shapes -->
  <rect x="973.500" y="16" width="7" height="7" stroke="#d8d8d8" stroke-width="1.100"/>
  <circle cx="988.500" cy="23.500" r="4" stroke="#d8d8d8" stroke-width="1.100"/>
  <path d="M976.500 34.500h9l-4.500-8z" stroke="#d8d8d8" stroke-width="1.100"/>
  <!-- doc -->
  <path d="M1011 15.500h11l5 5v14.500h-16z" fill="#4a90dc"/>
  <path d="M1011 27l16 3v5h-16z" fill="#f0a030"/><path d="M1022 15.500v5h5z" fill="#a8ccf0"/>
  <path d="M1016 15.500v12M1011 21h13" stroke="#e8f0fa" stroke-width="1"/><circle cx="1016" cy="21" r="2" fill="#4a90dc" stroke="#fff" stroke-width="1"/>
  <path d="M1023 32l2 2 4-5" stroke="#58c060" stroke-width="1.500"/>
  <!-- fullscreen -->
  <rect x="1048.500" y="17.500" width="19" height="14.500" stroke="#d0d0d0" stroke-width="1.200"/>
  <path d="M1059.500 20h5.500v5.500zM1051 29.500v-5.500l5.500 5.500z" fill="#e0e0e0"/><path d="M1061 24l3-3M1052 28.500l3.500-3.500" stroke="#e0e0e0" stroke-width="1.500"/>
  <!-- hamburger -->
  <path d="M1080 17.500h20M1080 24.500h20M1080 32h20" stroke="#e6e6e6" stroke-width="2"/>
</svg>
<div class="t" style="left:76px;top:831px;font-size:15px;font-weight:bold;color:#fff">模型</div>
<div class="t" style="left:137px;top:831px;font-size:15px;color:#e8e8e8">布局1</div>
<div class="t" style="left:207px;top:831px;font-size:15px;color:#e8e8e8">布局2</div>
<div class="t" style="left:414.500px;top:833px;font-size:14.500px;font-weight:bold;color:#fff">模型</div>
<div class="t" style="left:844.500px;top:832px;font-size:14.500px;color:#f0f0f0;letter-spacing:-.5px;transform:scaleX(.82);transform-origin:left top">1:1</div>
<div class="t" style="left:992.500px;top:841px;font-size:12px;font-family:'Liberation Mono',monospace;color:#d8141e;letter-spacing:-.25px;opacity:.9">zhanshaoyi.com</div>

</div>
</body>
</html>
